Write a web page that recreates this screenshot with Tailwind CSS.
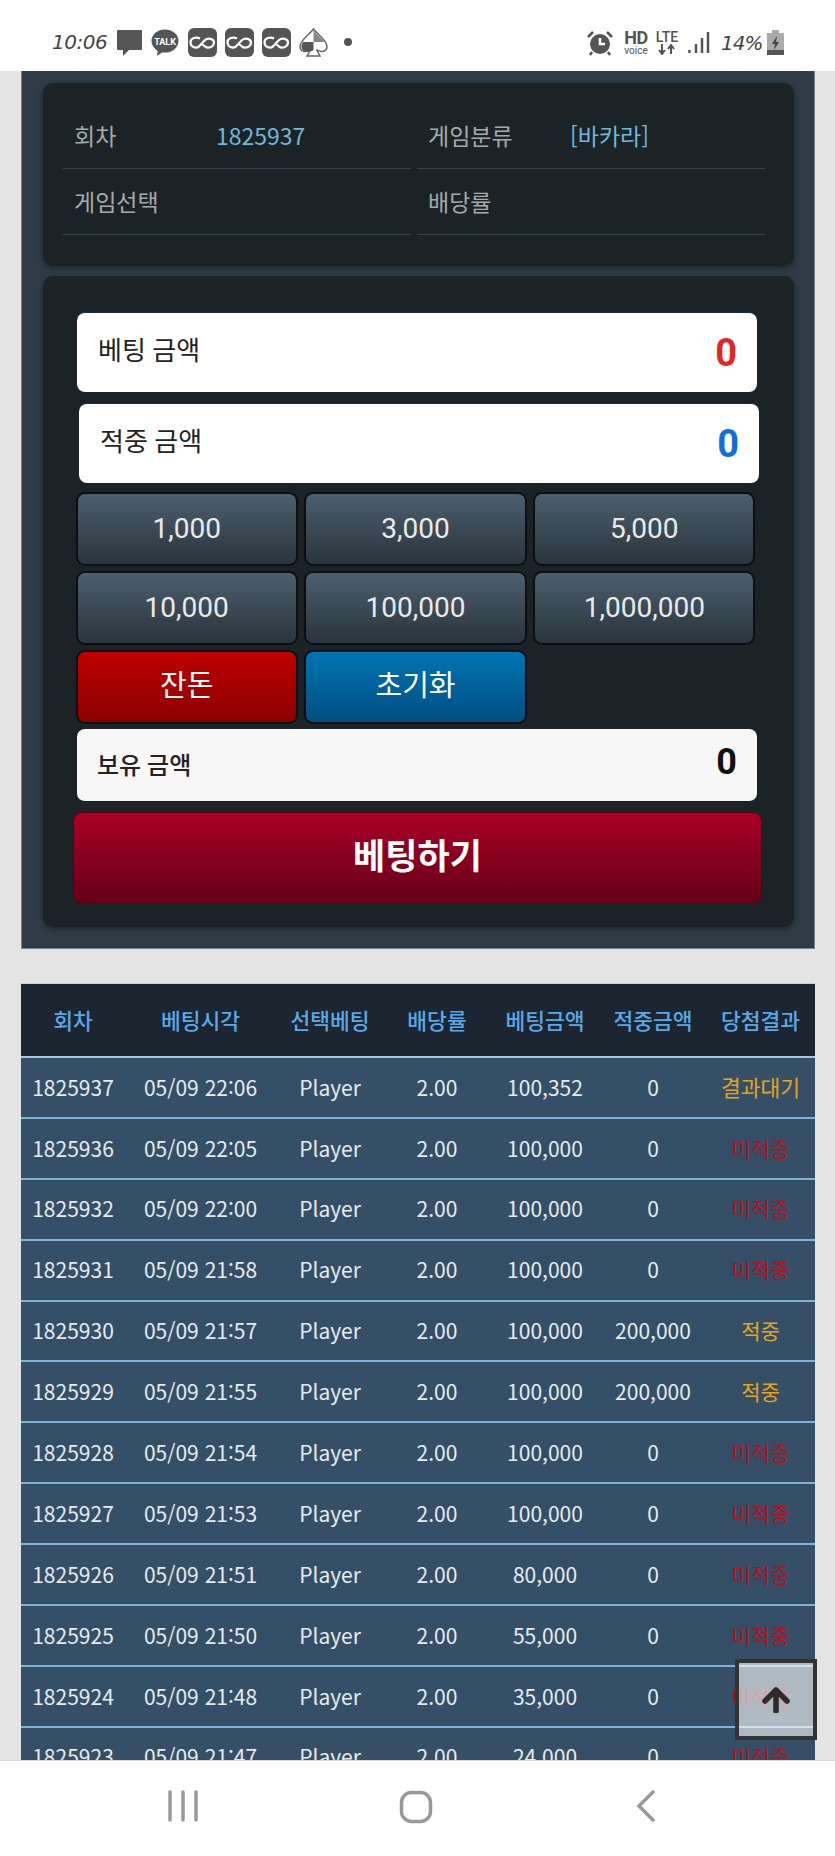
<!DOCTYPE html>
<html lang="ko">
<head>
    <meta charset="UTF-8">
    <meta name="viewport" content="width=device-width, initial-scale=1.0">
    <title>베팅</title>
    <script src="https://cdn.jsdelivr.net/npm/@tailwindcss/browser@4"></script>
</head>
<body class="bg-[#e4e4e4] font-['Noto_Sans_CJK_KR','Noto_Sans',sans-serif]">
    <div class="relative w-[835px] h-[1856px] overflow-hidden flex flex-col">
        <!-- status bar -->
        <div class="h-[71px] shrink-0 bg-white relative flex items-center text-[#555]">
            <div class="flex items-center pl-[52px] gap-[8px] pt-[13px]">
                <span class="w-[56px] font-['DejaVu_Sans',sans-serif] italic text-[20px] tracking-[-0.5px] text-[#444] font-[200]">10:06</span>
                <svg width="27" height="27" viewBox="0 0 27 27"><path d="M2 1h23a1 1 0 0 1 1 1v18a1 1 0 0 1-1 1H13l-6 6v-6H2a1 1 0 0 1-1-1V2a1 1 0 0 1 1-1z" fill="#555"/></svg>
                <svg width="28" height="27" viewBox="0 0 28 27"><ellipse cx="14" cy="12" rx="13.500" ry="11.500" fill="#555"/><path d="M7 20l-1 7 7-5z" fill="#555"/><text x="14" y="15.500" text-anchor="middle" font-size="9" font-weight="700" fill="#fff" font-family="Roboto">TALK</text></svg>
                <svg width="29" height="29" class="ml-[1px]" viewBox="0 0 29 29"><rect width="29" height="29" rx="6" fill="#555"/><path d="M12 10.500C8 8.500 2.500 10 2.500 14.500c0 4 5 6.500 8.500 4l6-6.500c3-2.500 9-1.500 9 2.500 0 4-5.500 6.500-9 4l-3-2.500" fill="none" stroke="#fff" stroke-width="2.200"/></svg>
                <svg width="29" height="29" viewBox="0 0 29 29"><rect width="29" height="29" rx="6" fill="#555"/><path d="M12 10.500C8 8.500 2.500 10 2.500 14.500c0 4 5 6.500 8.500 4l6-6.500c3-2.500 9-1.500 9 2.500 0 4-5.500 6.500-9 4l-3-2.500" fill="none" stroke="#fff" stroke-width="2.200"/></svg>
                <svg width="29" height="29" viewBox="0 0 29 29"><rect width="29" height="29" rx="6" fill="#555"/><path d="M12 10.500C8 8.500 2.500 10 2.500 14.500c0 4 5 6.500 8.500 4l6-6.500c3-2.500 9-1.500 9 2.500 0 4-5.500 6.500-9 4l-3-2.500" fill="none" stroke="#fff" stroke-width="2.200"/></svg>
                <svg width="29" height="29" viewBox="0 0 29 29"><path d="M14.500 1C11 6 1 12 1 18.500c0 5 6 6.500 10.500 3L8 28h13l-3.500-6.500c4.500 3.500 10.500 2 10.500-3C28 12 18 6 14.500 1z" fill="#fff" stroke="#666" stroke-width="1.500"/><path d="M14.500 14v8c-4 3-12 2-12-3.500 0-1.500.5-3 1.500-4.500z" fill="#555"/><path d="M14.500 14V2c2.500 4 8 8 11 12z" fill="#888"/></svg>
                <span class="w-[8px] h-[8px] rounded-full bg-[#555] ml-[8px]"></span>
            </div>
            <div class="absolute right-[51px] top-[29px] flex items-center">
                <svg width="26" height="26" viewBox="0 0 26 26"><circle cx="13" cy="14" r="10" fill="#555"/><path d="M13 8v6h5" fill="none" stroke="#fff" stroke-width="2.500"/><path d="M1 7l5-5M25 7l-5-5M5 22l-2 3M21 22l2 3" stroke="#555" stroke-width="2.500"/></svg>
                <div class="ml-[10px] w-[26px] flex flex-col items-center font-['Roboto',sans-serif] text-[#555] leading-none">
                    <span class="text-[18px] font-bold h-[16px] tracking-[-0.5px]">HD</span>
                    <span class="text-[10px] mt-[1px]">voice</span>
                </div>
                <div class="ml-[5px] w-[26px] flex flex-col items-center font-['Roboto',sans-serif] text-[#555] leading-none">
                    <span class="text-[14px] font-medium h-[13px]">LTE</span>
                    <svg width="18" height="11" viewBox="0 0 18 11" class="mt-[1px]"><path d="M4 0v8M1 6l3 4 3-4M13 10V2M10 5l3-4 3 4" fill="none" stroke="#555" stroke-width="2"/></svg>
                </div>
                <svg width="22" height="24" viewBox="0 0 22 24" class="ml-[8px]"><path d="M1.500 22v-3M8 22v-9M14 22V7M20 22V1" stroke="#555" stroke-width="2.500"/></svg>
                <span class="ml-[11px] w-[43px] font-['DejaVu_Sans',sans-serif] italic font-[200] text-[20px] tracking-[-1px] text-[#444] leading-none">14%</span>
                <svg width="17" height="25" viewBox="0 0 17 25" class="ml-[3px]"><path d="M5 0h7v3h5v22H0V3h5z" fill="#aaa"/><path d="M0 20h17v5H0z" fill="#555"/><path d="M10 6L5 14h3l-1 6 5-8H9z" fill="#444"/></svg>
            </div>
        </div>

        <!-- page -->
        <div class="h-[1689px] shrink-0 overflow-hidden pl-[21px]">
            <div class="w-[794px] h-[878px] bg-[#2f3c46] border-x border-b border-[#6f8696] border-t-0 px-[21px] pt-[12px]">
                <!-- game info -->
                <div class="w-[751px] h-[183px] bg-[#1c2327] rounded-[10px] shadow-[0_2px_6px_rgba(0,0,0,0.4)] pl-[20px] pr-[29px] pt-[20px]">
                    <div class="grid grid-cols-2 gap-x-[6px] text-[23px] text-[#a5a9ab]">
                        <div class="h-[66px] border-b border-[#39434a] flex items-center pl-[11px]"><span class="w-[142px]">회차</span><span class="text-[#6fb8d8]">1825937</span></div>
                        <div class="h-[66px] border-b border-[#39434a] flex items-center pl-[11px]"><span class="w-[142px]">게임분류</span><span class="text-[#6fb8d8]">[바카라]</span></div>
                        <div class="h-[66px] border-b border-[#39434a] flex items-center pl-[11px]"><span>게임선택</span></div>
                        <div class="h-[66px] border-b border-[#39434a] flex items-center pl-[11px]"><span>배당률</span></div>
                    </div>
                </div>

                <!-- bet form -->
                <div class="mt-[10px] w-[751px] h-[651px] bg-[#1c2327] rounded-[10px] shadow-[0_2px_6px_rgba(0,0,0,0.4)] pt-[36px] font-['Roboto','Noto_Sans_CJK_KR',sans-serif]">
                    <div class="ml-[34px] w-[680px] h-[80px] bg-white rounded-[8px] border-t border-[#1c2a55] flex items-center justify-between pl-[21px] pr-[20px]">
                        <span class="text-[26px] text-[#222] -mt-[3px]">베팅 금액</span>
                        <span class="text-[38px] font-bold text-[#e22626] leading-none">0</span>
                    </div>
                    <div class="mt-[11px] ml-[36px] w-[680px] h-[80px] bg-white rounded-[8px] border-t border-[#1c2a55] flex items-center justify-between pl-[21px] pr-[20px]">
                        <span class="text-[26px] text-[#222] -mt-[3px]">적중 금액</span>
                        <span class="text-[38px] font-bold text-[#0f6fe0] leading-none">0</span>
                    </div>
                    <div class="mt-[9px] ml-[32.500px] w-[680px] grid grid-cols-3 gap-x-[6.500px] gap-y-[5px] text-[28px] text-[#e8ebec]">
                        <button class="h-[74px] rounded-[9px] border-2 border-[#0b0f12] bg-gradient-to-b from-[#4c5f6e] to-[#2a353d]">1,000</button>
                        <button class="h-[74px] rounded-[9px] border-2 border-[#0b0f12] bg-gradient-to-b from-[#4c5f6e] to-[#2a353d]">3,000</button>
                        <button class="h-[74px] rounded-[9px] border-2 border-[#0b0f12] bg-gradient-to-b from-[#4c5f6e] to-[#2a353d]">5,000</button>
                        <button class="h-[74px] rounded-[9px] border-2 border-[#0b0f12] bg-gradient-to-b from-[#4c5f6e] to-[#2a353d]">10,000</button>
                        <button class="h-[74px] rounded-[9px] border-2 border-[#0b0f12] bg-gradient-to-b from-[#4c5f6e] to-[#2a353d]">100,000</button>
                        <button class="h-[74px] rounded-[9px] border-2 border-[#0b0f12] bg-gradient-to-b from-[#4c5f6e] to-[#2a353d]">1,000,000</button>
                        <button class="h-[74px] rounded-[9px] border-2 border-[#0b0f12] bg-gradient-to-b from-[#c00000] to-[#8c0000] text-white text-[29px]">잔돈</button>
                        <button class="h-[74px] rounded-[9px] border-2 border-[#0b0f12] bg-gradient-to-b from-[#0074b4] to-[#004f80] text-white text-[29px]">초기화</button>
                    </div>
                    <div class="mt-[5px] ml-[34px] w-[680px] h-[73px] bg-[#f7f7f7] rounded-[8px] border-b border-[#101d44] flex items-center justify-between pl-[20px] pr-[20px]">
                        <span class="text-[24px] font-medium text-[#222] mt-[2px]">보유 금액</span>
                        <span class="text-[36px] font-bold text-[#111] leading-none -mt-[7px]">0</span>
                    </div>
                    <button class="mt-[10px] ml-[30px] w-[689px] h-[92px] rounded-[9px] border border-[#5a0012] bg-gradient-to-b from-[#aa0026] to-[#650018] text-white text-[35px] font-bold">베팅하기</button>
                </div>
            </div>

            <!-- bet history -->
            <div class="mt-[34px] w-[794px] text-[21px] text-[#e6ecef] text-center">
                <div class="grid grid-cols-[104px_151px_108px_106px_110px_106px_109px] h-[73px] items-center bg-[#1b2630] border-t border-[#cfcfcf] text-[21.500px] font-medium text-[#5aa9e6]">
                    <span>회차</span><span>베팅시각</span><span>선택베팅</span><span>배당률</span><span>베팅금액</span><span>적중금액</span><span>당첨결과</span>
                </div>
                <div class="h-[2px] bg-[#a9c9dc]"></div>
                <div class="grid grid-cols-[104px_151px_108px_106px_110px_106px_109px] h-[60.900px] items-center bg-[#355066] border-b-2 border-[#7fb3d1]">
                    <span>1825937</span><span>05/09 22:06</span><span>Player</span><span>2.00</span><span>100,352</span><span>0</span><span class="text-[#e8a31c] text-[21.500px]">결과대기</span>
                </div>
                <div class="grid grid-cols-[104px_151px_108px_106px_110px_106px_109px] h-[60.900px] items-center bg-[#355066] border-b-2 border-[#7fb3d1]">
                    <span>1825936</span><span>05/09 22:05</span><span>Player</span><span>2.00</span><span>100,000</span><span>0</span><span class="text-[#b8101f]">미적중</span>
                </div>
                <div class="grid grid-cols-[104px_151px_108px_106px_110px_106px_109px] h-[60.900px] items-center bg-[#355066] border-b-2 border-[#7fb3d1]">
                    <span>1825932</span><span>05/09 22:00</span><span>Player</span><span>2.00</span><span>100,000</span><span>0</span><span class="text-[#b8101f]">미적중</span>
                </div>
                <div class="grid grid-cols-[104px_151px_108px_106px_110px_106px_109px] h-[60.900px] items-center bg-[#355066] border-b-2 border-[#7fb3d1]">
                    <span>1825931</span><span>05/09 21:58</span><span>Player</span><span>2.00</span><span>100,000</span><span>0</span><span class="text-[#b8101f]">미적중</span>
                </div>
                <div class="grid grid-cols-[104px_151px_108px_106px_110px_106px_109px] h-[60.900px] items-center bg-[#355066] border-b-2 border-[#7fb3d1]">
                    <span>1825930</span><span>05/09 21:57</span><span>Player</span><span>2.00</span><span>100,000</span><span>200,000</span><span class="text-[#e8a31c]">적중</span>
                </div>
                <div class="grid grid-cols-[104px_151px_108px_106px_110px_106px_109px] h-[60.900px] items-center bg-[#355066] border-b-2 border-[#7fb3d1]">
                    <span>1825929</span><span>05/09 21:55</span><span>Player</span><span>2.00</span><span>100,000</span><span>200,000</span><span class="text-[#e8a31c]">적중</span>
                </div>
                <div class="grid grid-cols-[104px_151px_108px_106px_110px_106px_109px] h-[60.900px] items-center bg-[#355066] border-b-2 border-[#7fb3d1]">
                    <span>1825928</span><span>05/09 21:54</span><span>Player</span><span>2.00</span><span>100,000</span><span>0</span><span class="text-[#b8101f]">미적중</span>
                </div>
                <div class="grid grid-cols-[104px_151px_108px_106px_110px_106px_109px] h-[60.900px] items-center bg-[#355066] border-b-2 border-[#7fb3d1]">
                    <span>1825927</span><span>05/09 21:53</span><span>Player</span><span>2.00</span><span>100,000</span><span>0</span><span class="text-[#b8101f]">미적중</span>
                </div>
                <div class="grid grid-cols-[104px_151px_108px_106px_110px_106px_109px] h-[60.900px] items-center bg-[#355066] border-b-2 border-[#7fb3d1]">
                    <span>1825926</span><span>05/09 21:51</span><span>Player</span><span>2.00</span><span>80,000</span><span>0</span><span class="text-[#b8101f]">미적중</span>
                </div>
                <div class="grid grid-cols-[104px_151px_108px_106px_110px_106px_109px] h-[60.900px] items-center bg-[#355066] border-b-2 border-[#7fb3d1]">
                    <span>1825925</span><span>05/09 21:50</span><span>Player</span><span>2.00</span><span>55,000</span><span>0</span><span class="text-[#b8101f]">미적중</span>
                </div>
                <div class="grid grid-cols-[104px_151px_108px_106px_110px_106px_109px] h-[60.900px] items-center bg-[#355066] border-b-2 border-[#7fb3d1]">
                    <span>1825924</span><span>05/09 21:48</span><span>Player</span><span>2.00</span><span>35,000</span><span>0</span><span class="text-[#b8101f]">미적중</span>
                </div>
                <div class="grid grid-cols-[104px_151px_108px_106px_110px_106px_109px] h-[60.900px] items-center bg-[#355066] border-b-2 border-[#7fb3d1]">
                    <span>1825923</span><span>05/09 21:47</span><span>Player</span><span>2.00</span><span>24,000</span><span>0</span><span class="text-[#b8101f]">미적중</span>
                </div>
            </div>
        </div>

        <!-- android nav -->
        <div class="h-[96px] shrink-0 bg-white border-t border-[#d8d8d8] flex items-start pt-[29px]">
            <svg width="32" height="32" viewBox="0 0 32 32" class="ml-[167px]"><path d="M3 2v28M16 2v28M29 2v28" stroke="#999" stroke-width="3.500" stroke-linecap="round"/></svg>
            <svg width="34" height="34" viewBox="0 0 34 34" class="ml-[200px]"><rect x="2.500" y="2.500" width="29" height="29" rx="10" fill="none" stroke="#999" stroke-width="3.500"/></svg>
            <svg width="20" height="32" viewBox="0 0 20 32" class="ml-[203px]"><path d="M17 2L3 16l14 14" fill="none" stroke="#999" stroke-width="3.500" stroke-linecap="round"/></svg>
        </div>

        <!-- scroll to top -->
        <button class="absolute left-[735px] top-[1659px] w-[82px] h-[81px] border-4 border-[#333] bg-white/60 flex items-center justify-center">
            <svg width="28" height="26" viewBox="0 0 28 26"><path d="M14 24V4M3 14L14 3l11 11" fill="none" stroke="#2b2b2b" stroke-width="5.500" stroke-linecap="round" stroke-linejoin="round"/></svg>
        </button>
    </div>
</body>
</html>
